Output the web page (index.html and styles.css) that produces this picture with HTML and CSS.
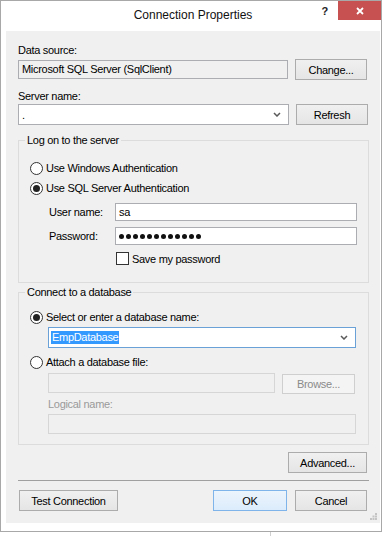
FILE: index.html
```html
<!DOCTYPE html>
<html lang="en">
<head>
  <meta charset="UTF-8" />
  <title>Connection Properties</title>
  <link rel="stylesheet" href="styles.css">
</head>
<body>
  <div class="window">
    <div class="titlebar">
      <div></div>
      <div class="title">Connection Properties</div>
      <div class="caption">
        <span class="help">?</span>
        <span class="close">
          <svg width="8" height="8" viewBox="0 0 8 8"><path d="M1 1L7 7M7 1L1 7" stroke="#fff" stroke-width="1.8"/></svg>
        </span>
      </div>
    </div>

    <div class="client">
      <div class="label">Data source:</div>
      <div class="row">
        <div class="textbox readonly source">Microsoft SQL Server (SqlClient)</div>
        <div class="btn side">Change...</div>
      </div>

      <div class="label server-label">Server name:</div>
      <div class="row">
        <div class="combo server">
          <span>.</span>
          <svg class="chevron" width="8" height="5" viewBox="0 0 8 5"><path d="M1 1L4 4L7 1" fill="none" stroke="#5a5a5a" stroke-width="1.5"/></svg>
        </div>
        <div class="btn side">Refresh</div>
      </div>

      <fieldset class="group logon">
        <legend>Log on to the server</legend>
        <div class="radio-row"><span class="radio"></span>Use Windows Authentication</div>
        <div class="radio-row"><span class="radio checked"></span>Use SQL Server Authentication</div>
        <div class="cred-row user">
          <span class="cred-label">User name:</span>
          <div class="textbox cred">sa</div>
        </div>
        <div class="cred-row pass">
          <span class="cred-label">Password:</span>
          <div class="textbox cred">
            <span class="dots"><i></i><i></i><i></i><i></i><i></i><i></i><i></i><i></i><i></i><i></i><i></i><i></i></span>
          </div>
        </div>
        <div class="check-row"><span class="checkbox"></span>Save my password</div>
      </fieldset>

      <fieldset class="group database">
        <legend>Connect to a database</legend>
        <div class="radio-row"><span class="radio checked"></span>Select or enter a database name:</div>
        <div class="combo dbname focused">
          <span class="selected">EmpDatabase</span>
          <svg class="chevron" width="8" height="5" viewBox="0 0 8 5"><path d="M1 1L4 4L7 1" fill="none" stroke="#5a5a5a" stroke-width="1.5"/></svg>
        </div>
        <div class="radio-row attach"><span class="radio"></span>Attach a database file:</div>
        <div class="file-row">
          <div class="textbox disabled file"></div>
          <div class="btn disabled browse">Browse...</div>
        </div>
        <div class="label disabled-label">Logical name:</div>
        <div class="textbox disabled logical"></div>
      </fieldset>

      <div class="btn advanced">Advanced...</div>
      <div class="separator"></div>

      <div class="footer">
        <div class="btn test">Test Connection</div>
        <div class="btn ok">OK</div>
        <div class="btn cancel">Cancel</div>
      </div>

      <svg class="grip" width="7" height="7" viewBox="0 0 7 7">
        <rect x="5" y="0" width="2" height="2" fill="#c4c4c4"/>
        <rect x="2.5" y="2.5" width="2" height="2" fill="#c4c4c4"/>
        <rect x="5" y="2.5" width="2" height="2" fill="#c4c4c4"/>
        <rect x="0" y="5" width="2" height="2" fill="#c4c4c4"/>
        <rect x="2.5" y="5" width="2" height="2" fill="#c4c4c4"/>
        <rect x="5" y="5" width="2" height="2" fill="#c4c4c4"/>
      </svg>
    </div>
  </div>
  <div class="behind"></div>
</body>
</html>
```

FILE: styles.css
```css
* { box-sizing: border-box }
body {
  margin: 0;
  background: #fff;
  font-family: "Liberation Sans", Arial, sans-serif;
  font-size: 11px;
  letter-spacing: -0.3px;
  color: #000;
}

/* window frame */
.window {
  width: 382px; height: 532px;
  border: 1px solid #a8a8a8;
  padding: 0 1px 8px 5px;
  display: flex; flex-direction: column;
  background: #fff;
}
.titlebar {
  height: 30px; flex: none;
  display: grid; grid-template-columns: 1fr auto 1fr;
}
.title { font-size: 12px; line-height: 29px; letter-spacing: 0; color: #111 }
.caption { display: flex; justify-content: flex-end; align-items: flex-start; margin-right: -1px }
.help { font-weight: bold; font-size: 11px; line-height: 11px; margin: 5px 10px 0 0; color: #222 }
.close {
  width: 43px; height: 19px;
  background: #c75050;
  display: flex; align-items: center; justify-content: center;
}

.client {
  position: relative;
  flex: 1;
  background: #f0f0f0;
  padding: 13px 11px 10px 12px;
  display: flex; flex-direction: column;
}

.label { line-height: 13px; height: 13px; margin-bottom: 2px }
.server-label { margin-top: 10px; margin-bottom: 1px }

.row { display: flex; align-items: center; gap: 7px; height: 21px }

.textbox {
  height: 19px;
  border: 1px solid #abadb3;
  background: #fff;
  padding: 0 3px;
  line-height: 17px;
  white-space: nowrap;
}
.textbox.readonly { background: #f0f0f0 }
.source { width: 270px }

.combo {
  height: 21px;
  border: 1px solid #abadb3;
  background: #fff;
  display: flex; align-items: center; justify-content: space-between;
  padding: 0 7px 0 3px;
}
.combo.focused { border-color: #6aa1d6 }
.server { width: 271px }
.chevron { flex: none }

.btn {
  height: 21px;
  border: 1px solid #acacac;
  background: linear-gradient(#f0f0f0, #e5e5e5);
  display: flex; align-items: center; justify-content: center;
  white-space: nowrap;
}
.side { width: 72px }

/* group boxes */
.group {
  margin: 9px 0 0;
  width: 351px; min-width: 0;
  border: 1px solid #dcdcdc;
  padding: 11px 11px 17px 11px;
  display: flex; flex-direction: column;
}
.group legend {
  line-height: 13px;
  padding: 0 2px;
  margin-left: -5px;
}
.database { margin-top: 3px; padding-top: 8px; padding-bottom: 10px }

.radio-row { display: flex; align-items: center; gap: 3px; height: 20px }
.radio {
  width: 13px; height: 13px; border-radius: 50%;
  border: 1px solid #333;
  background: #fff;
  display: flex; align-items: center; justify-content: center;
}
.radio.checked::after {
  content: ""; width: 7px; height: 7px; border-radius: 50%; background: #222;
}

.cred-row { display: flex; align-items: center; height: 18px; padding-left: 19px }
.cred-row.user { margin-top: 5px }
.cred-row.pass { margin-top: 6px }
.cred-label { width: 66px }
.cred { width: 242px; height: 18px; line-height: 16px; display: flex; align-items: center }
.dots { display: flex; gap: 2px; margin-left: 0 }
.dots i { width: 5px; height: 5px; border-radius: 50%; background: #111 }

.check-row { display: flex; align-items: center; gap: 3px; height: 13px; margin-top: 7px; padding-left: 86px }
.checkbox { width: 13px; height: 13px; border: 1px solid #333; background: #fff }

.dbname { width: 308px; margin-left: 18px; padding-left: 2px }
.selected { background: #3399ff; color: #fff; line-height: 13px; padding: 0 1px }
.attach { margin-top: 4px }

.file-row { display: flex; align-items: flex-start; gap: 7px; margin: 1px 0 0 18px; height: 21px }
.textbox.disabled { background: #f0f0f0; border-color: #d6d6d6; height: 20px }
.file { width: 227px }
.btn.disabled { background: #f4f4f4; border-color: #cfcfcf; color: #8a8a8a }
.browse { width: 73px; height: 20px; margin-top: 1px }
.disabled-label { color: #9a9a9a; margin: 4px 0 3px 18px; height: 13px }
.logical { width: 308px; margin-left: 18px }

.advanced { width: 79px; align-self: flex-end; margin: 7px 2px 0 0 }
.separator { height: 1px; background: #a0a0a0; margin-top: 7px }

.footer { display: flex; margin-top: 9px; padding: 0 2px 0 1px }
.test { width: 99px; margin-right: auto }
.ok {
  width: 74px; margin-right: 8px;
  border-color: #7eb4ea;
  background: linear-gradient(#ecf4fc, #dcecfc);
}
.cancel { width: 72px }

.grip { position: absolute; right: 3px; bottom: 3px }

.behind { width: 1px; height: 4px; margin-left: 270px; background: #d0d0d0 }
```
